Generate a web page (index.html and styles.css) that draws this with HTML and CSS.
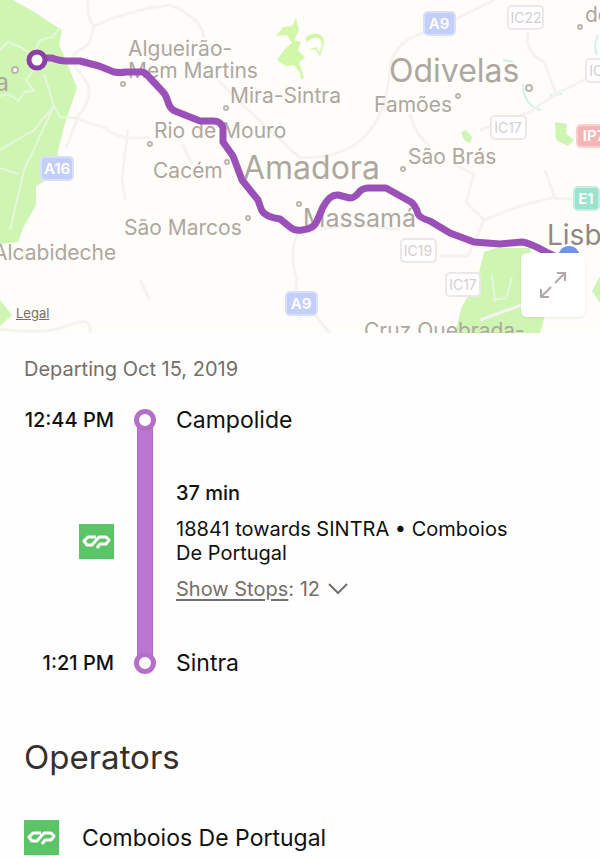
FILE: index.html
```html
<!DOCTYPE html>
<html lang="en">
<head>
    <meta charset="UTF-8">
    <meta name="viewport" content="width=device-width, initial-scale=1.0">
    <title>Campolide - Sintra</title>
    <link rel="stylesheet" href="styles.css">
</head>
<body>
    <svg class="symbols" width="0" height="0" aria-hidden="true">
        <symbol id="cp" viewBox="0 0 35 35">
            <path d="M17 13H9L5 17 8 21H13L20 13H27L30 16 27 20H21L18 24" fill="none" stroke="#fff" stroke-width="3" stroke-linejoin="round"/>
        </symbol>
    </svg>
    <div class="map">
        <svg class="map-canvas" viewBox="0 0 600 333" preserveAspectRatio="xMidYMid slice" role="img" aria-label="Route map">
            <rect class="land" width="600" height="333"/>
            <!-- parks -->
            <g class="park">
                <path d="M0 0H13L36 13 48 21 62 30 59 45 66 60 77 88 66 120 58 150 56 175 36 186 36 205 23 228 18 242 0 244Z"/>
                <path d="M0 300L12 315 0 326Z"/>
                <path d="M484 252L496 248 530 248 545 316 540 333H455L462 306 476 284Z"/>
                <path d="M600 276L592 291 600 303Z"/>
                <path d="M461 132L466 130 472 137 470 143 464 140Z"/>
                <path d="M555 122L567 124 566 134 574 140 568 146 556 140Z"/>
            </g>
            <path class="scrub" d="M296 18L292 26 283 27 276 36 287 35 292 43 284 50 277 60 286 66 294 65 300 73 301 80 304 78 299 62 305 58 298 50 301 42 294 40 299 30ZM305 38C314 30 324 33 324 43L320 57 316 50 309 49 316 47 320 53 322 43C320 36 314 36 307 42Z"/>
            <path class="water" d="M503 60L513 62M523 84C523 98 530 108 541 110M550 95L562 94M598 35Q593 45 597 55"/>
            <!-- roads -->
            <g class="road">
                <path d="M88 0Q86 16 94 26L89 44 74 54 76 68 88 84Q92 100 78 117L66 148M94 26Q128 10 170 5 202 18 204 38"/>
                <path d="M75 118L105 128Q122 142 150 137M183 145L192 164M218 80L246 108 300 158M125 200L122 178 128 130"/>
                <path d="M300 158Q350 158 370 130 386 112 390 70 392 44 420 34L440 27 494 0M410 114Q416 136 430 146"/>
                <path d="M528 32Q524 52 544 62L556 94 530 112 480 130M556 94L600 72"/>
                <path d="M300 235Q340 220 400 230M440 256H468L484 220 466 202 474 174 455 165M484 220L520 206 550 198 586 200M555 198L545 170"/>
                <path d="M300 230Q288 246 296 278L300 320M0 329Q48 335 70 325T90 333M140 280L150 300M294 290L330 333M480 320L530 302"/>
            </g>
            <g class="trail">
                <path d="M60 28L52 37 40 40 34 52M0 50L8 42 20 47 30 53 34 70 26 80 34 91 24 92 19 101 9 94 0 96M44 74L54 106 34 130 0 150M54 106L60 117 77 118M54 106L24 170 10 230M0 168L18 174"/>
                <path d="M492 275L495 302M512 278L506 298 492 300"/>
            </g>
            <!-- road shields -->
            <g class="shield blue">
                <rect x="424" y="12" width="31" height="23" rx="4"/><text x="439" y="29">A9</text>
                <rect x="41" y="157" width="32" height="23" rx="4"/><text x="57" y="174">A16</text>
                <rect x="286" y="292" width="31" height="23" rx="4"/><text x="301" y="309">A9</text>
            </g>
            <g class="shield white">
                <rect x="508" y="6" width="35" height="23" rx="4"/><text x="526" y="23">IC22</text>
                <rect x="491" y="116" width="35" height="23" rx="4"/><text x="508" y="133">IC17</text>
                <rect x="586" y="59" width="35" height="23" rx="4"/><text x="603" y="76">IC17</text>
                <rect x="401" y="239" width="35" height="23" rx="4"/><text x="418" y="256">IC19</text>
                <rect x="446" y="273" width="34" height="23" rx="4"/><text x="463" y="290">IC17</text>
            </g>
            <g class="shield red"><rect x="577" y="125" width="32" height="22" rx="4"/><text x="594" y="141">IP7</text></g>
            <g class="shield teal"><rect x="574" y="187" width="25" height="23" rx="4"/><text x="586" y="204">E1</text></g>
            <!-- places -->
            <g class="dot">
                <circle cx="15" cy="70" r="3"/>
                <circle cx="123" cy="84" r="2"/>
                <circle cx="226" cy="108" r="2"/>
                <circle cx="150" cy="144" r="2"/>
                <circle cx="227" cy="162" r="2"/>
                <circle cx="248" cy="218" r="2"/>
                <circle cx="299" cy="204" r="2"/>
                <circle cx="403" cy="169" r="2"/>
                <circle cx="458" cy="96" r="2"/>
                <circle cx="529" cy="88" r="3"/>
                <circle cx="580" cy="27" r="2"/>
            </g>
            <g class="place">
                <text x="128" y="56">Algueirão-</text>
                <text x="128" y="78">Mem Martins</text>
                <text x="230" y="103">Mira-Sintra</text>
                <text x="154" y="138">Rio de Mouro</text>
                <text x="153" y="178">Cacém</text>
                <text x="124" y="235">São Marcos</text>
                <text x="-7" y="260">Alcabideche</text>
                <text x="374" y="112">Famões</text>
                <text x="408" y="164">São Brás</text>
                <text x="364" y="338">Cruz Quebrada-</text>
                <text x="585" y="22">de</text>
            </g>
            <g class="place town">
                <text x="303" y="227">Massamá</text>
                <text x="-5" y="91">a</text>
            </g>
            <g class="place city">
                <text x="389" y="82">Odivelas</text>
                <text x="243" y="179">Amadora</text>
            </g>
            <text class="place capital" x="547" y="245">Lisboa</text>
            <!-- train line -->
            <path class="route" d="M37 58H52Q60 61 66 61H80L99 66 114 72Q120 73 126 72H139Q144 71 149 77L163 92Q166 95 168 102 170 109 175 111L200 121H213Q221 121 223 128V142L233 156 242 180 258 200Q260 206 262 211 266 217 280 219L290 227Q294 231 302 230 314 229 317 221L323 207Q330 194 338 195L350 198Q355 198 360 191 364 188 368 188H386L411 202Q416 206 418 214 420 218 430 221L450 233 474 242 500 244 522 242Q530 243 548 253L562 260"/>
            <circle class="route-end" cx="37" cy="60" r="8"/>
            <circle class="here" cx="569" cy="257" r="12"/>
        </svg>
        <a class="legal" href="#legal">Legal</a>
        <button class="expand" type="button" aria-label="Expand map">
            <svg width="28" height="28" viewBox="0 0 28 28">
                <path d="M16 12L26 2M18 2H26V10M12 16L2 26M2 18V26H10"/>
            </svg>
        </button>
    </div>
    <main class="content">
        <p class="departing">Departing Oct 15, 2019</p>
        <section class="trip">
            <time class="time">12:44 PM</time>
            <span class="node"></span>
            <h2 class="station">Campolide</h2>

            <svg class="logo"><use href="#cp"/></svg>
            <span class="rail"></span>
            <div class="leg">
                <p class="duration">37 min</p>
                <p>18841 towards SINTRA • Comboios De Portugal</p>
                <button class="stops" type="button">
                    <span><u>Show Stops</u>: 12</span>
                    <svg width="20" height="12" viewBox="0 0 20 12"><path d="M1 1L10 10 19 1"/></svg>
                </button>
            </div>

            <time class="time">1:21 PM</time>
            <span class="node"></span>
            <h2 class="station">Sintra</h2>
        </section>
        <section>
            <h1 class="heading">Operators</h1>
            <div class="operator">
                <svg class="logo"><use href="#cp"/></svg>
                <span>Comboios De Portugal</span>
            </div>
        </section>
    </main>
</body>
</html>
```

FILE: styles.css
```css
*{box-sizing: border-box;margin: 0;padding: 0;}
body{background: #fefefe;color: #111;font-family: Inter, "Liberation Sans", sans-serif;font-size: 20px;line-height: 24px;}
button{border: 0;background: none;font: inherit;cursor: pointer;}
.symbols{position: absolute;}

/* map */
.map{position: relative;height: 333px;overflow: hidden;}
.map-canvas{display: block;width: 100%;height: 100%;}
.land{fill: #fefdfa;}
.park{fill: #cff5b3;}
.scrub{fill: #d3f7a8;}
.water{fill: none;stroke: #d3f0ec;stroke-width: 2;}
.road{fill: none;stroke: #f5f3f0;stroke-width: 3;}
.trail{fill: none;stroke: #e6f6dc;stroke-width: 2;}
.shield rect{stroke-width: 2;}
.shield text{font-size: 15px;font-weight: 600;text-anchor: middle;fill: #fff;}
.blue rect{fill: #c3cff8;stroke: #d9e0fb;}
.white rect{fill: #fff;stroke: #ece8ea;}
.shield.white text{font-size: 14px;font-weight: 400;fill: #d3cdd0;}
.red rect{fill: #f6b5b5;stroke: #f9d0d0;}
.teal rect{fill: #9be3cc;stroke: #c4efe2;}
.dot{fill: #fff;stroke: #bcb5ae;stroke-width: 2;}
.place{fill: #aea79f;font-size: 21px;}
.town{font-size: 25px;}
.city{font-size: 32px;}
.capital{font-size: 28px;fill: #8f8983;}
.route{fill: none;stroke: #9a50b8;stroke-width: 7;stroke-linejoin: round;}
.route-end{fill: #fff;stroke: #8c3fa5;stroke-width: 5;}
.here{fill: #7292ee;stroke: #fff;stroke-width: 2;}
.legal{position: absolute;left: 16px;bottom: 8px;color: #766e68;font-size: 13px;}
.expand{position: absolute;right: 15px;bottom: 16px;display: flex;align-items: center;justify-content: center;width: 64px;height: 64px;border-radius: 6px;background: #fff;box-shadow: 0 1px 3px rgba(0,0,0,.08);}
.expand path{fill: none;stroke: #b3a8a8;stroke-width: 2;}

/* trip */
.content{padding: 24px 24px 3px;}
.departing{color: #766e68;}
.trip{display: grid;grid-template-columns: 90px 22px 1fr;column-gap: 20px;align-items: center;margin-top: 28px;}
.time{font-weight: 500;line-height: 22px;text-align: right;white-space: nowrap;}
.station{font-size: 23px;font-weight: 400;line-height: 22px;}
.node{position: relative;width: 22px;height: 22px;border: 5px solid #b56fc9;border-radius: 50%;background: #fff;}
.rail{align-self: stretch;margin: -4px 3px;border: solid #b467cd;border-width: 0 1px;background: #bb77d0;}
.logo{display: block;width: 35px;height: 35px;background: #5bc466;}
.trip .logo{justify-self: end;}
.leg{display: flex;flex-direction: column;align-items: flex-start;gap: 12px;max-width: 350px;padding: 50px 0 51px;}
.duration{font-weight: 500;}
.stops{display: flex;align-items: center;gap: 8px;color: #766e68;}
.stops u{text-underline-offset: 3px;}
.stops path{fill: none;stroke: #766e68;stroke-width: 2;}

/* operators */
.heading{margin-top: 63px;color: #35302c;font-size: 33px;font-weight: 400;line-height: 40px;}
.operator{display: flex;align-items: center;gap: 23px;margin-top: 43px;font-size: 23px;}
```
